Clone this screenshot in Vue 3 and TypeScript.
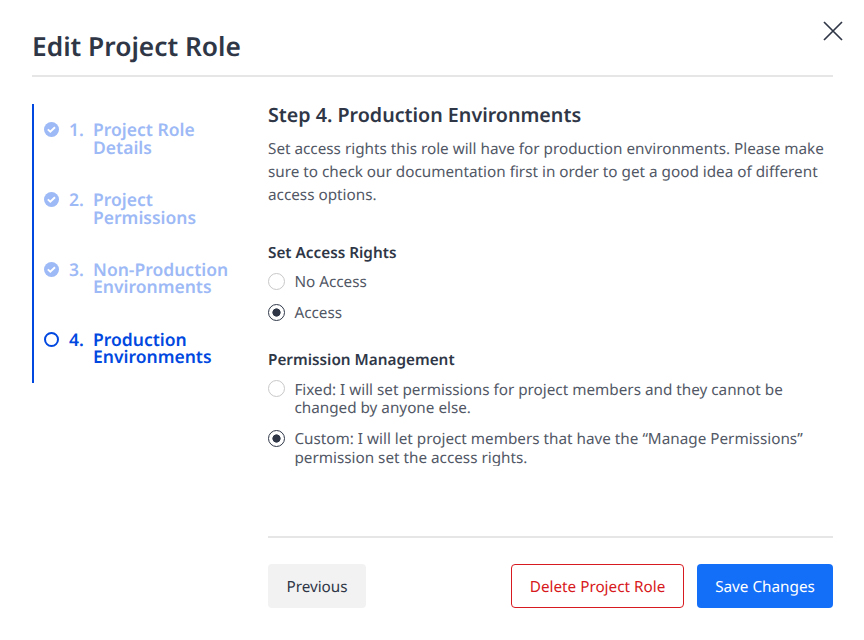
<script setup lang="ts">
import { ref } from 'vue'

interface Step { id: number; first: string; second: string; done: boolean }
interface Option { value: string; lines: string[] }

const steps: Step[] = [
  { id: 1, first: 'Project Role', second: 'Details', done: true },
  { id: 2, first: 'Project', second: 'Permissions', done: true },
  { id: 3, first: 'Non-Production', second: 'Environments', done: true },
  { id: 4, first: 'Production', second: 'Environments', done: false },
]
const accessOptions: Option[] = [
  { value: 'none', lines: ['No Access'] },
  { value: 'access', lines: ['Access'] },
]
const permissionOptions: Option[] = [
  { value: 'fixed', lines: ['Fixed: I will set permissions for project members and they cannot be', 'changed by anyone else.'] },
  { value: 'custom', lines: ['Custom: I will let project members that have the “Manage Permissions”', 'permission set the access rights.'] },
]
const access = ref('access')
const permission = ref('custom')
</script>

<template>
  <div class="dialog" role="dialog" aria-labelledby="title">
    <header class="header">
      <h1 id="title">Edit Project Role</h1>
      <button class="close" aria-label="Close">
        <svg width="20" height="20" viewBox="0 0 20 20"><path d="M1 1 19 19M19 1 1 19" /></svg>
      </button>
    </header>
    <div class="body">
      <nav class="steps">
        <div v-for="s in steps" :key="s.id" class="step" :class="{ done: s.done }">
          <svg class="mark" width="15" height="15" viewBox="0 0 15 15">
            <template v-if="s.done">
              <circle cx="7.5" cy="7.5" r="7.5" fill="currentColor" />
              <path d="m3.8 7.4 2.5 2.4 4.7-4.6" fill="none" stroke="#fff" stroke-width="1.9" />
            </template>
            <circle v-else cx="7.5" cy="7.5" r="6.5" fill="none" stroke="currentColor" stroke-width="2" />
          </svg>
          <span class="number">{{ s.id }}.</span>
          <span class="name"><span class="line">{{ s.first }}</span><span class="line">{{ s.second }}</span></span>
        </div>
      </nav>
      <main class="content">
        <h2>Step 4. Production Environments</h2>
        <p class="intro">Set access rights this role will have for production environments. Please make<br />sure to check our documentation first in order to get a good idea of different<br />access options.</p>
        <section class="group access">
          <h3>Set Access Rights</h3>
          <label v-for="o in accessOptions" :key="o.value" class="option">
            <input v-model="access" type="radio" name="access" :value="o.value" />
            <span><span v-for="l in o.lines" :key="l" class="line">{{ l }}</span></span>
          </label>
        </section>
        <section class="group permission">
          <h3>Permission Management</h3>
          <label v-for="o in permissionOptions" :key="o.value" class="option">
            <input v-model="permission" type="radio" name="permission" :value="o.value" />
            <span class="text"><span v-for="l in o.lines" :key="l" class="line">{{ l }}</span></span>
          </label>
        </section>
        <footer class="footer">
          <button class="btn previous">Previous</button>
          <button class="btn delete">Delete Project Role</button>
          <button class="btn save">Save Changes</button>
        </footer>
      </main>
    </div>
  </div>
</template>

<style>
body { margin: 0; background: #fff; }
</style>

<style scoped>
* { box-sizing: border-box; }
.dialog { width: 864px; height: 640px; padding: 0 31px 32px 32px; font-family: "Noto Sans", sans-serif; text-rendering: geometricPrecision; color: #2f3747; background: #fff; display: flex; flex-direction: column; }
.header { height: 77px; flex: none; border-bottom: 2px solid #e6e6e6; display: flex; justify-content: space-between; align-items: flex-start; }
h1, h2, h3, p { margin: 0; }
h1 { font-size: 26.3px; line-height: 36px; font-weight: 600; margin: 28px 0 0 0; }
button { font-family: inherit; text-rendering: inherit; cursor: pointer; }
.close { width: 20px; height: 20px; padding: 0; border: 0; background: none; margin: 21px -10px 0 0; }
.close svg { display: block; fill: none; stroke: #2f3747; stroke-width: 1.7; }
.body { flex: 1; display: flex; gap: 34px; padding-top: 27px; }
.steps { width: 202px; height: 279px; border-left: 2px solid #0048e0; padding: 17px 0 0 10px; }
.step { height: 70px; display: flex; font-size: 17.5px; line-height: 18px; font-weight: 600; color: #0048e0; }
.step:nth-child(n+3) .name { line-height: 17px; padding-top: 1px; }
.step.done { color: #9db9f6; }
.mark { flex: none; margin-top: 1px; }
.number { width: 24px; margin-left: 10px; flex: none; }
.name { white-space: nowrap; }
.content { width: 565px; display: flex; flex-direction: column; }
h2 { font-size: 19.66px; line-height: 24px; font-weight: 600; margin-top: -1px; }
.intro { font-size: 15.28px; line-height: 23px; color: #525866; margin-top: 11px; white-space: nowrap; }
h3 { font-size: 15.3px; line-height: 20px; font-weight: 600; }
.access { margin-top: 36px; }
.permission { margin-top: 27px; height: 116px; overflow: hidden; }
.option { display: flex; gap: 9.4px; font-size: 15.28px; line-height: 19px; color: #525866; margin-top: 12px; }
.access h3 + .option { margin-top: 10px; }
.permission .option { margin-top: 13px; }
.permission h3 + .option { margin-top: 10px; line-height: 18px; }
.permission h3 + .option .text { padding-top: 1px; }
.line { display: block; white-space: nowrap; }
input { appearance: none; width: 17px; height: 17px; margin: 0; border: 1px solid #c8c8c8; border-radius: 50%; flex: none; }
input:checked { border-color: #2f3747; background: radial-gradient(circle, #2f3747 0 3.8px, transparent 4.4px); }
.footer { margin-top: auto; height: 72px; border-top: 2px solid #e6e6e6; padding-top: 26px; display: flex; }
.btn { height: 44px; padding: 2px 0 0; border: 0; border-radius: 4px; font-size: 15.28px; }
.previous { width: 98px; background: #f2f2f2; color: #2f3747; margin-right: auto; }
.delete { width: 173px; background: #fff; border: 1px solid #d71920; color: #d71920; margin-right: 13px; }
.save { width: 136px; background: #146ff8; color: #fff; }
</style>
